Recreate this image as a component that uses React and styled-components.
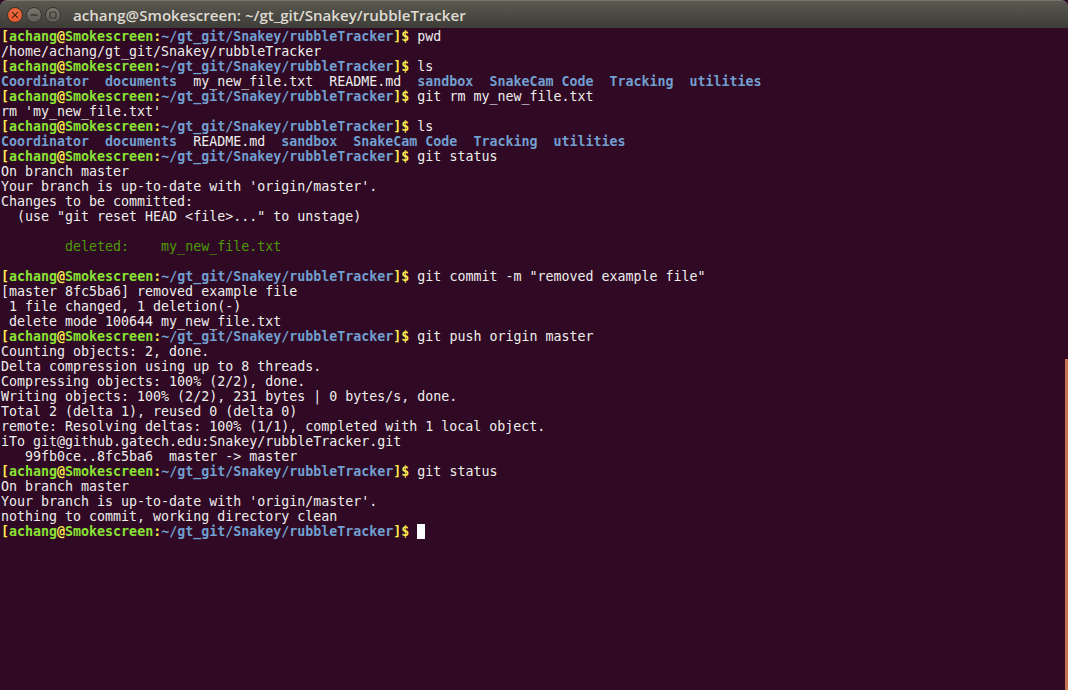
import styled, { createGlobalStyle } from 'styled-components';

const GlobalStyle = createGlobalStyle`
    html, body {
        margin: 0;
        padding: 0;
        height: 100%;
        background: #300a24;
        overflow: hidden;
    }
`

const Window = styled.div`
    position: relative;
    width: 1068px;
    height: 690px;
    overflow: hidden;
    background: #300a24;
`

const TitleBar = styled.div`
    display: flex;
    align-items: center;
    height: 28px;
    padding: 0 0 0 7px;
    box-sizing: border-box;
    border-top: 1px solid #77766c;
    border-radius: 7px 7px 0 0;
    background: linear-gradient(#5a5950, #3d3c37);
`

const Controls = styled.div`
    display: flex;
    gap: 3px;
    width: 66px;
`

const WinButton = styled.div`
    display: flex;
    align-items: center;
    justify-content: center;
    width: 16px;
    height: 16px;
    border-radius: 50%;
    box-sizing: border-box;
    border: 1px solid #35342f;
    background: ${p => p.$close ? 'radial-gradient(circle at 50% 40%, #f0744a, #dc4a1e)' : 'linear-gradient(#7a796e, #5c5b53)'};
    color: ${p => p.$close ? '#4a1c0c' : '#35342f'};
`

const Title = styled.span`
    font-family: "Open Sans", "Liberation Sans", sans-serif;
    font-size: 15.12px;
    font-weight: 600;
    color: #dfdbd2;
    white-space: nowrap;
`

const Terminal = styled.div`
    padding: 1px 0 0 1px;
    font-family: "DejaVu Sans Mono", monospace;
    font-size: 13.3px;
    line-height: 15px;
    color: #eeeeec;
`

const Line = styled.div`
    height: 15px;
    white-space: pre;
`

const Yellow = styled.b`
    color: #fce94f;
`

const Green = styled.b`
    color: #8ae234;
`

const Blue = styled.b`
    color: #729fcf;
`

const Staged = styled.span`
    color: #4e9a06;
`

const Cursor = styled.span`
    display: inline-block;
    width: 8px;
    height: 15px;
    vertical-align: top;
    background: #ffffff;
`

const Scrollbar = styled.div`
    position: absolute;
    top: 359px;
    right: 0;
    bottom: 0;
    width: 3px;
    background: #c8734f;
`

const Prompt = ({ children }) => (
    <Line>
        <Yellow>[</Yellow>
        <Green>achang</Green>
        <Yellow>@</Yellow>
        <Green>Smokescreen</Green>
        <Yellow>:</Yellow>
        <Blue>~/gt_git/Snakey/rubbleTracker</Blue>
        <Yellow>]$</Yellow>
        {' '}{children}
    </Line>
);

const output = {
    status: ['On branch master', "Your branch is up-to-date with 'origin/master'."],
    commit: ['[master 8fc5ba6] removed example file', ' 1 file changed, 1 deletion(-)', ' delete mode 100644 my_new_file.txt'],
    push: [
        'Counting objects: 2, done.',
        'Delta compression using up to 8 threads.',
        'Compressing objects: 100% (2/2), done.',
        'Writing objects: 100% (2/2), 231 bytes | 0 bytes/s, done.',
        'Total 2 (delta 1), reused 0 (delta 0)',
        'remote: Resolving deltas: 100% (1/1), completed with 1 local object.',
        'iTo git@github.gatech.edu:Snakey/rubbleTracker.git',
        '   99fb0ce..8fc5ba6  master -> master',
    ],
};

const Lines = ({ items }) => items.map(text => <Line key={text}>{text}</Line>);

const App = () => (
    <Window>
        <GlobalStyle />
        <TitleBar>
            <Controls>
                <WinButton $close>
                    <svg width="8" height="8" viewBox="0 0 8 8">
                        <path d="M1.2 1.2l5.6 5.6M6.8 1.2l-5.6 5.6" stroke="currentColor" strokeWidth="1.2" />
                    </svg>
                </WinButton>
                <WinButton>
                    <svg width="8" height="8" viewBox="0 0 8 8">
                        <path d="M0.5 4h7" stroke="currentColor" strokeWidth="1.4" />
                    </svg>
                </WinButton>
                <WinButton>
                    <svg width="8" height="8" viewBox="0 0 8 8">
                        <rect x="1" y="1" width="6" height="6" rx="1" fill="none" stroke="currentColor" strokeWidth="1.2" />
                    </svg>
                </WinButton>
            </Controls>
            <Title>achang@Smokescreen: ~/gt_git/Snakey/rubbleTracker</Title>
        </TitleBar>
        <Terminal>
            <Prompt>pwd</Prompt>
            <Line>/home/achang/gt_git/Snakey/rubbleTracker</Line>
            <Prompt>ls</Prompt>
            <Line><Blue>Coordinator</Blue>  <Blue>documents</Blue>  my_new_file.txt  README.md  <Blue>sandbox</Blue>  <Blue>SnakeCam Code</Blue>  <Blue>Tracking</Blue>  <Blue>utilities</Blue></Line>
            <Prompt>git rm my_new_file.txt</Prompt>
            <Line>rm 'my_new_file.txt'</Line>
            <Prompt>ls</Prompt>
            <Line><Blue>Coordinator</Blue>  <Blue>documents</Blue>  README.md  <Blue>sandbox</Blue>  <Blue>SnakeCam Code</Blue>  <Blue>Tracking</Blue>  <Blue>utilities</Blue></Line>
            <Prompt>git status</Prompt>
            <Lines items={output.status} />
            <Line>Changes to be committed:</Line>
            <Line>  (use "git reset HEAD &lt;file&gt;..." to unstage)</Line>
            <Line> </Line>
            <Line>        <Staged>deleted:    my_new_file.txt</Staged></Line>
            <Line> </Line>
            <Prompt>git commit -m "removed example file"</Prompt>
            <Lines items={output.commit} />
            <Prompt>git push origin master</Prompt>
            <Lines items={output.push} />
            <Prompt>git status</Prompt>
            <Lines items={output.status} />
            <Line>nothing to commit, working directory clean</Line>
            <Prompt><Cursor /></Prompt>
        </Terminal>
        <Scrollbar />
    </Window>
);

export default App;
